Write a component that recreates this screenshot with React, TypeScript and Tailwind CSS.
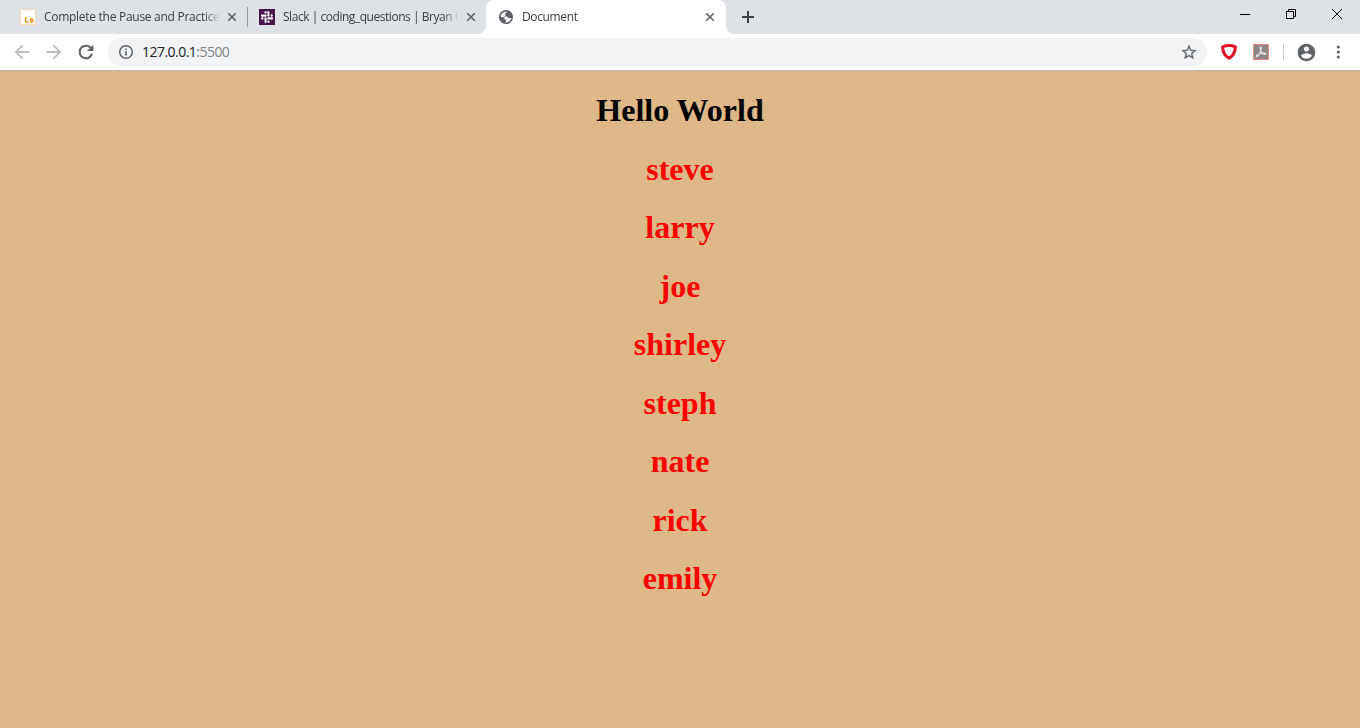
import React from "react";

type IconProps = { d: string; size: number; className?: string };

const Icon = ({ d, size, className = "" }: IconProps) => (
  <svg width={size} height={size} viewBox="0 0 24 24" fill="currentColor" className={`block shrink-0 ${className}`}>
    <path d={d} />
  </svg>
);

const ARROW = "M20 11H7.83l5.59-5.59L12 4l-8 8 8 8 1.41-1.41L7.83 13H20v-2z";
const REFRESH =
  "M17.65 6.35A7.958 7.958 0 0 0 12 4a8 8 0 1 0 7.73 10h-2.5A5.8 5.8 0 0 1 12 17.8 5.8 5.8 0 1 1 12 6.2c1.6 0 3.1.7 4.2 1.7L13 11h7V4l-2.35 2.35z";
const STAR =
  "M22 9.24l-7.19-.62L12 2 9.19 8.63 2 9.24l5.46 4.73L5.82 21 12 17.27 18.18 21l-1.63-7.03L22 9.24zM12 15.4l-3.76 2.27 1-4.28-3.32-2.88 4.38-.38L12 6.1l1.71 4.04 4.38.38-3.32 2.88 1 4.28L12 15.4z";
const PROFILE =
  "M12 2C6.48 2 2 6.48 2 12s4.48 10 10 10 10-4.48 10-10S17.52 2 12 2zm0 3c1.66 0 3 1.34 3 3s-1.34 3-3 3-3-1.34-3-3 1.34-3 3-3zm0 14.2c-2.5 0-4.71-1.28-6-3.22.03-1.99 4-3.08 6-3.08 1.99 0 5.97 1.09 6 3.08-1.29 1.94-3.5 3.22-6 3.22z";

const CloseIcon = () => (
  <svg width="10" height="10" viewBox="0 0 10 10" className="block shrink-0 text-[#5f6368]">
    <path d="M1.2 1.2l7.6 7.6M8.8 1.2L1.2 8.8" stroke="currentColor" strokeWidth="1.6" />
  </svg>
);

const LbIcon = () => (
  <svg width="16" height="16" viewBox="0 0 16 16" className="block shrink-0">
    <rect x=".5" y=".5" width="15" height="15" fill="#fff" stroke="#fbd9b4" />
    <path d="M5.7 8v5h3" fill="none" stroke="#f7942b" strokeWidth="1.6" />
    <path d="M10.5 9.6h1.5a.85.85 0 0 1 0 1.7h-1.5h1.700a.95.95 0 0 1 0 1.900h-1.700z" fill="none" stroke="#f7942b" strokeWidth="1.2" />
  </svg>
);

const SlackIcon = () => (
  <svg width="16" height="16" viewBox="0 0 16 16" className="block shrink-0">
    <rect width="16" height="16" fill="#4a154b" />
    <g stroke="#fff" strokeWidth="2.1" strokeLinecap="round">
      <path d="M3 6.6H6.6M9.4 3V6.6M13 9.4H9.4M6.6 13V9.4" />
      <path d="M6.500 3.200H6.600M12.800 6.500V6.600M9.500 12.800H9.400M3.200 9.500V9.400" />
    </g>
    <path d="M6.600 3.200v1M12.800 6.600h-1M9.400 12.800v-1M3.200 9.400h1" stroke="#fff" strokeWidth="2" />
  </svg>
);

const GlobeIcon = () => (
  <svg width="16" height="16" viewBox="0 0 16 16" className="block shrink-0">
    <circle cx="8" cy="8" r="7.1" fill="#5f6368" />
    <path
      d="M9.400 2.700c-.3 1-2.300.8-2.300 2 0 .8.8 1 .3 1.700-.5.7-1.700.3-1.900 1.200h3.200c1.200 0 1 1.300 1.800 1.600.8.300 1.700-.2 2.900-.100-.5 2.500-2.600 4.300-5.100 4.300l-1.100-.1c.1-.9 1-.8.9-1.700-.1-1-1.300-.8-1.500-1.700-.2-.7-.1-1.200-.8-1.600L2.700 8.100C2.600 5 5.500 2.200 9.400 2.700z"
      fill="#fff"
    />
  </svg>
);

const ShieldIcon = () => (
  <svg width="16" height="16" viewBox="0 0 16 16" className="block shrink-0">
    <path d="M8 1.6c2 0 4.3.5 6.400 1.300-.2 5.300-2.100 9-6.400 11.400C3.700 11.900 1.800 8.200 1.600 2.900 3.700 2.100 6 1.600 8 1.600z" fill="#fff" stroke="#e60f26" strokeWidth="3" strokeLinejoin="round" />
  </svg>
);

const PdfIcon = () => (
  <svg width="16" height="16" viewBox="0 0 16 16" className="block shrink-0">
    <rect x=".5" y=".5" width="15" height="15" fill="#8f8787" stroke="#e98b7d" />
    <path d="M7.600 3c1.300 0 .4 3.200-.5 5.200-1 2.200-2.700 4.600-3.600 4.300-1.100-.5 2-2.400 4.500-3 2.400-.6 4.900-.4 4.700.6-.2 1-2.700-.3-4-2C7.500 6.500 6.600 3 7.600 3z" fill="none" stroke="#e4dfdf" strokeWidth="1.200" />
  </svg>
);

type TabProps = { icon: React.ReactNode; title: string; spacing: string };

const TabContent = ({ icon, title, spacing }: TabProps) => (
  <>
    {icon}
    <span className={`ml-2 w-[176px] shrink-0 whitespace-nowrap text-[12px] leading-4 text-[#3c4043] mask-r-from-91% ${spacing}`}>
      {title}
    </span>
    <div className="ml-[7px]"><CloseIcon /></div>
  </>
);

const names = ["steve", "larry", "joe", "shirley", "steph", "nate", "rick", "emily"];

export default function App() {
  return (
    <div className="flex h-[728px] w-[1360px] flex-col overflow-hidden bg-[#deb887] font-['Open_Sans',sans-serif]">
      <header className="shrink-0">
        <div className="flex h-[34px] bg-[#dee1e6]">
          <div className="flex w-[247px] items-center pl-5">
            <TabContent icon={<LbIcon />} title="Complete the Pause and Practice:" spacing="tracking-[-0.28px]" />
          </div>
          <div className="mt-[7px] h-5 w-px bg-[#96999e]" />
          <div className="flex w-[238px] items-center pl-[11px]">
            <TabContent icon={<SlackIcon />} title="Slack | coding_questions | Bryan U" spacing="tracking-[-0.46px]" />
          </div>
          <div className="relative flex w-[240px] items-center rounded-t-lg bg-white pl-3">
            <svg width="8" height="8" viewBox="0 0 8 8" className="absolute bottom-0 -left-2">
              <path d="M8 0v8H0a8 8 0 0 0 8-8z" fill="#fff" />
            </svg>
            <TabContent icon={<GlobeIcon />} title="Document" spacing="tracking-[-0.36px]" />
            <svg width="8" height="8" viewBox="0 0 8 8" className="absolute -right-2 bottom-0">
              <path d="M0 0v8h8a8 8 0 0 1-8-8z" fill="#fff" />
            </svg>
          </div>
          <div className="flex flex-1 items-center pl-4">
            <svg width="12" height="12" viewBox="0 0 12 12" className="block text-[#3c4043]">
              <path d="M6 0v12M0 6h12" stroke="currentColor" strokeWidth="2" />
            </svg>
          </div>
          <div className="flex h-7 text-black">
            <div className="flex w-[46px] items-center justify-center">
              <svg width="10" height="10" viewBox="0 0 10 10"><path d="M0 5.5h10" stroke="currentColor" /></svg>
            </div>
            <div className="flex w-[46px] items-center justify-center">
              <svg width="10" height="10" viewBox="0 0 10 10" fill="none" stroke="currentColor">
                <path d="M.5 2.5h7v7h-7zM2.5 2.5v-2h7v7h-2" />
              </svg>
            </div>
            <div className="flex w-[46px] items-center justify-center">
              <svg width="10" height="10" viewBox="0 0 10 10"><path d="M0 0l10 10M10 0L0 10" stroke="currentColor" /></svg>
            </div>
          </div>
        </div>
        <div className="flex h-9 items-center bg-white text-[#5f6368]">
          <div className="flex w-[108px] items-center gap-[10px] pl-[11px]">
            <Icon d={ARROW} size={22} className="text-[#babcbe]" />
            <Icon d={ARROW} size={22} className="rotate-180 text-[#babcbe]" />
            <Icon d={REFRESH} size={22} />
          </div>
          <div className="flex h-7 w-[1099px] items-center rounded-full bg-[#f1f3f4] px-[10px]">
            <svg width="16" height="16" viewBox="0 0 16 16" className="block shrink-0">
              <circle cx="8" cy="8" r="6.3" fill="none" stroke="currentColor" strokeWidth="1.5" />
              <path d="M8 4.4v1.7M8 7.2v4.3" stroke="currentColor" strokeWidth="1.7" />
            </svg>
            <div className="ml-2 flex-1 text-[14px] leading-5 tracking-[-0.53px] text-[#80868b]">
              <span className="text-[#202124]">127.0.0.1</span>:5500
            </div>
            <svg width="16" height="16" viewBox="1.3 1 21.4 21.4" className="block shrink-0">
              <path d={STAR} fill="currentColor" stroke="currentColor" strokeWidth=".3" />
            </svg>
          </div>
          <div className="flex flex-1 items-center pl-[14px]">
            <ShieldIcon />
            <div className="ml-4"><PdfIcon /></div>
            <div className="ml-[14px] h-4 w-px bg-[#c6c9cd]" />
            <Icon d={PROFILE} size={21} className="ml-3" />
            <svg width="4" height="16" viewBox="0 0 4 16" fill="currentColor" className="ml-[19px] block">
              <circle cx="2.3" cy="3" r="1.6" />
              <circle cx="2.3" cy="8" r="1.6" />
              <circle cx="2.3" cy="13" r="1.6" />
            </svg>
          </div>
        </div>
        <div className="h-px bg-[#b6b4b6]" />
      </header>
      <main className="flex flex-col gap-[21.44px] pt-[21.44px] text-center font-['Liberation_Serif',serif] text-[32px] leading-[37px] font-bold">
        <h1 className="text-black">Hello World</h1>
        {names.map((name) => (
          <h1 key={name} className="text-[#ff0000]">{name}</h1>
        ))}
      </main>
    </div>
  );
}
